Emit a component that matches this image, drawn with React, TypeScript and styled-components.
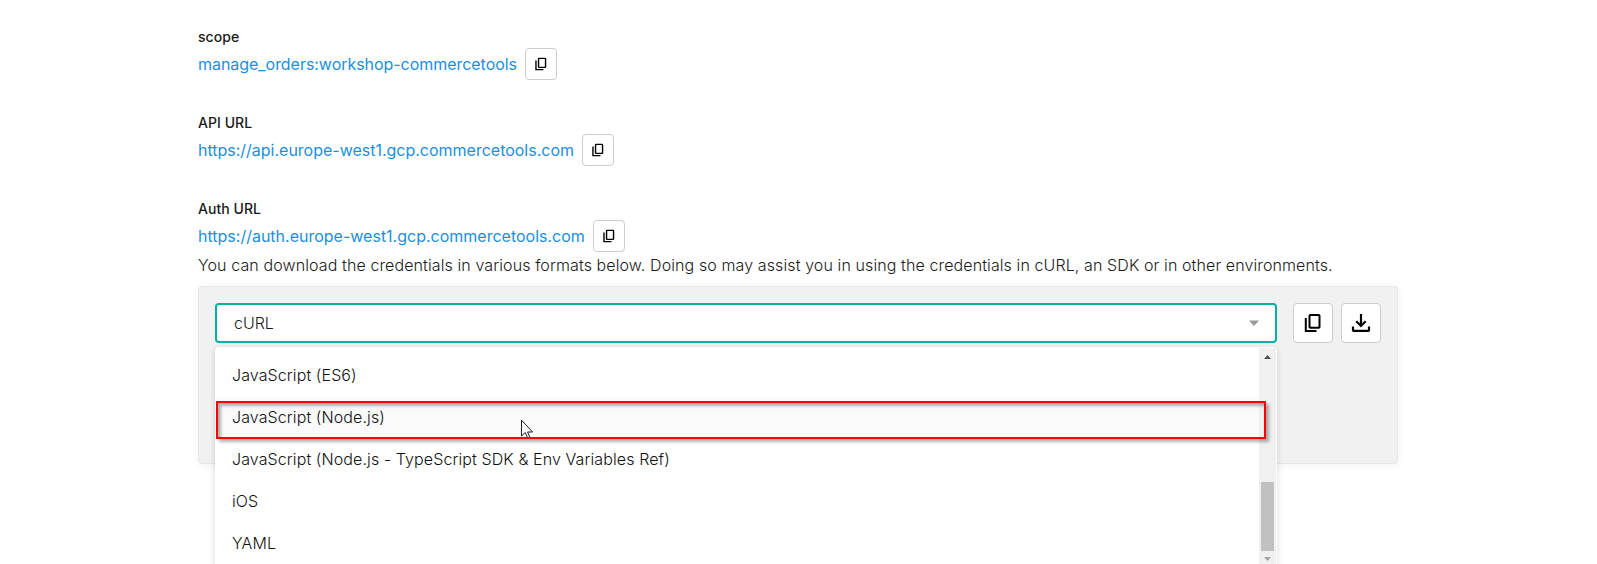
import React from "react";
import styled, { createGlobalStyle } from "styled-components";

const GlobalStyle = createGlobalStyle`
  * { box-sizing: border-box; }
  html, body { margin: 0; height: 564px; overflow: hidden; background: #fff; }
  body { font-family: Inter, "Liberation Sans", sans-serif; font-size: 16px; color: #1a1a1a; }
`;

const Page = styled.main`
  width: 1200px;
  height: 564px;
  margin-left: 198px;
  padding-top: 26px;
`;

const Field = styled.section`
  height: 86px;
  &:nth-of-type(3) { height: 54px; }
`;

const Label = styled.div`
  height: 22px;
  line-height: 21px;
  font-size: 14px;
  font-weight: 500;
  letter-spacing: 0.05px;
`;

const ValueRow = styled.div`
  display: flex;
  align-items: center;
  gap: 8px;
  height: 32px;
`;

const Value = styled.span<{ $width: number; $tracking: number }>`
  width: ${(p) => p.$width}px;
  white-space: nowrap;
  color: #1a90dc;
  line-height: 24px;
  letter-spacing: ${(p) => p.$tracking}px;
`;

const IconButton = styled.button<{ $size: number }>`
  flex: none;
  display: flex;
  align-items: center;
  justify-content: center;
  width: ${(p) => p.$size}px;
  height: ${(p) => p.$size}px;
  padding: 0;
  border: 1px solid #ccc;
  border-radius: 4px;
  background: #fff;
  color: #000;
`;

const Description = styled.p`
  margin: 0;
  height: 34px;
  line-height: 24px;
  padding-top: 1px;
  font-weight: 300;
  letter-spacing: 0.105px;
  white-space: nowrap;
`;

const Panel = styled.div`
  height: 178px;
  padding: 16px;
  display: flex;
  align-items: flex-start;
  border: 1px solid #e6e6e6;
  border-radius: 4px;
  background: #f1f1f1;
  box-shadow: 0 1px 8px rgba(0, 0, 0, 0.06);
`;

const Select = styled.div`
  position: relative;
  width: 1062px;
  margin-right: 16px;
`;

const Control = styled.div`
  display: flex;
  align-items: center;
  justify-content: space-between;
  height: 40px;
  padding: 0 16px 0 17px;
  border: 2px solid #00b39e;
  border-radius: 4px;
  background: #fff;
  font-weight: 300;
`;

const Buttons = styled.div`
  display: flex;
  gap: 8px;
`;

const Menu = styled.div`
  position: absolute;
  top: 44px;
  left: 0;
  width: 1062px;
  height: 222px;
  padding: 1px 1px 0 0;
  display: flex;
  border-radius: 4px;
  background: #fff;
  box-shadow: 0 2px 6px rgba(0, 0, 0, 0.16);
`;

const Options = styled.div`
  flex: 1;
  padding-top: 7px;
  font-weight: 300;
  letter-spacing: 0.1px;
  color: #111;
`;

const Option = styled.div<{ $hovered?: boolean }>`
  height: 42px;
  padding: 0 17px;
  line-height: 41px;
  background: ${(p) => (p.$hovered ? "#fafafa" : "transparent")};
`;

const Scrollbar = styled.div`
  display: flex;
  flex-direction: column;
  align-items: center;
  width: 17px;
  background: #f0f0f0;
`;

const ScrollArrow = styled.svg<{ $gap: number }>`
  display: block;
  margin-top: ${(p) => p.$gap}px;
`;

const Thumb = styled.div`
  width: 13px;
  height: 69px;
  margin-top: 123px;
  background: #c1c1c1;
`;

const Highlight = styled.div`
  position: absolute;
  top: 98px;
  left: 1px;
  width: 1050px;
  height: 38px;
  border: 2px solid #f00;
  box-shadow: 3px 3px 3px rgba(0, 0, 0, 0.3), inset 3px 3px 3px rgba(0, 0, 0, 0.3);
`;

const Pointer = styled.svg`
  position: absolute;
  left: 306px;
  top: 116px;
`;

const CopyIcon = ({ size }: { size: number }) => (
  <svg width={size} height={size} viewBox="0 0 20 20" fill="none" stroke="currentColor" strokeWidth="2">
    <rect x="6.5" y="2" width="10" height="12.8" rx="0.8" />
    <path d="M2.8 5v13h10.7" />
  </svg>
);

const DownloadIcon = () => (
  <svg width="20" height="20" viewBox="0 0 20 20" fill="none" stroke="currentColor" strokeWidth="2.2">
    <path d="M10 1v12M5.3 8.3L10 13l4.7-4.7M2 13.6v3.6q0 .6.6.6h14.8q.6 0 .6-.6v-3.6" />
  </svg>
);

const fields = [
  { label: "scope", value: "manage_orders:workshop-commercetools", width: 319, tracking: -0.04 },
  { label: "API URL", value: "https://api.europe-west1.gcp.commercetools.com", width: 376, tracking: -0.008 },
  { label: "Auth URL", value: "https://auth.europe-west1.gcp.commercetools.com", width: 387, tracking: 0 },
];

const options = [
  "JavaScript (ES6)",
  "JavaScript (Node.js)",
  "JavaScript (Node.js - TypeScript SDK & Env Variables Ref)",
  "iOS",
  "YAML",
];

export default function App() {
  return (
    <>
      <GlobalStyle />
      <Page>
        {fields.map((f) => (
          <Field key={f.label}>
            <Label>{f.label}</Label>
            <ValueRow>
              <Value $width={f.width} $tracking={f.tracking}>
                {f.value}
              </Value>
              <IconButton $size={32} aria-label="Copy">
                <CopyIcon size={14} />
              </IconButton>
            </ValueRow>
          </Field>
        ))}
        <Description>
          You can download the credentials in various formats below. Doing so may assist you in using the
          credentials in cURL, an SDK or in other environments.
        </Description>
        <Panel>
          <Select>
            <Control>
              <span>cURL</span>
              <svg width="10" height="6" viewBox="0 0 10 6">
                <path d="M0 0.5h10L5 6z" fill="#999" />
              </svg>
            </Control>
            <Menu>
              <Options>
                {options.map((o, i) => (
                  <Option key={o} $hovered={i === 1}>
                    {o}
                  </Option>
                ))}
              </Options>
              <Scrollbar>
                <ScrollArrow $gap={7} width="7" height="4" viewBox="0 0 7 4">
                  <path d="M0 4h7L3.5 0z" fill="#505050" />
                </ScrollArrow>
                <Thumb />
                <ScrollArrow $gap={6} width="7" height="4" viewBox="0 0 7 4">
                  <path d="M0 0h7L3.5 4z" fill="#a3a3a3" />
                </ScrollArrow>
              </Scrollbar>
            </Menu>
            <Pointer width="13" height="19" viewBox="0 0 13 19">
              <path
                d="M.5 1.2v15.8l3.7-3.5 2.3 5h2.4l-2.3-5.5h5z"
                fill="#fff"
                stroke="#1b1b2b"
                strokeWidth="1"
              />
            </Pointer>
            <Highlight />
          </Select>
          <Buttons>
            <IconButton $size={40} aria-label="Copy">
              <CopyIcon size={20} />
            </IconButton>
            <IconButton $size={40} aria-label="Download">
              <DownloadIcon />
            </IconButton>
          </Buttons>
        </Panel>
      </Page>
    </>
  );
}
